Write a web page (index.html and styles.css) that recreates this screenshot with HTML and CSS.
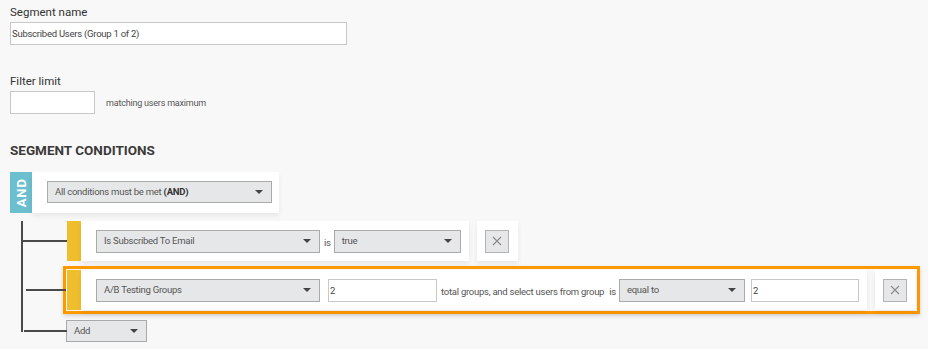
FILE: index.html
```html
<!DOCTYPE html>
<html lang="en">
<head>
  <meta charset="UTF-8" />
  <title>Segment</title>
  <link rel="stylesheet" href="styles.css">
</head>
<body>
  <div class="page">
    <label class="field-label">Segment name</label>
    <input class="text-input name-input" type="text" value="Subscribed Users (Group 1 of 2)" />

    <label class="field-label filter-label">Filter limit</label>
    <div class="filter-row">
      <input class="text-input limit-input" type="text" />
      <span class="hint">matching users maximum</span>
    </div>

    <h3 class="section-title">SEGMENT CONDITIONS</h3>

    <div class="group-head">
      <div class="badge"><span>AND</span></div>
      <div class="panel head-panel">
        <div class="select w-and"><span>All conditions must be met <b>(AND)</b></span><i class="caret"></i></div>
      </div>
    </div>

    <div class="tree">
      <div class="cond branch">
        <div class="cond-bar"></div>
        <div class="panel cond-body">
          <div class="select w-prop"><span>Is Subscribed To Email</span><i class="caret"></i></div>
          <span class="word">is</span>
          <div class="select w-bool"><span>true</span><i class="caret"></i></div>
        </div>
        <div class="panel remove-panel">
          <button class="remove">
            <svg width="10" height="10" viewBox="0 0 10 10"><path d="M1 1L9 9M9 1L1 9" stroke="#8a8a8a" stroke-width="1.1" fill="none"/></svg>
          </button>
        </div>
      </div>

      <div class="highlight branch">
        <div class="cond">
          <div class="cond-bar"></div>
          <div class="panel cond-body">
            <div class="select w-prop"><span>A/B Testing Groups</span><i class="caret"></i></div>
            <input class="text-input w-total" type="text" value="2" />
            <span class="word long">total groups, and select users from group</span>
            <span class="word is-gap">is</span>
            <div class="select w-op"><span>equal to</span><i class="caret"></i></div>
            <input class="text-input w-group" type="text" value="2" />
          </div>
          <div class="panel remove-panel">
            <button class="remove">
              <svg width="10" height="10" viewBox="0 0 10 10"><path d="M1 1L9 9M9 1L1 9" stroke="#8a8a8a" stroke-width="1.1" fill="none"/></svg>
            </button>
          </div>
        </div>
      </div>

      <div class="select add branch"><span>Add</span><i class="caret"></i></div>
    </div>
  </div>
</body>
</html>
```

FILE: styles.css
```css
html, body {
  margin: 0;
  padding: 0;
}
body {
  background-color: #f8f8f8;
  font-family: Roboto, "Liberation Sans", sans-serif;
  color: #444;
}

.page {
  padding: 0 10px;
}

.field-label {
  display: block;
  margin-top: 5px;
  font-size: 11.5px;
  line-height: 15px;
  color: #333;
}
.filter-label {
  margin-top: 29px;
}

.text-input {
  display: block;
  box-sizing: border-box;
  height: 23px;
  margin: 2px 0 0 0;
  padding: 0 1px;
  border: 1px solid #c8c8c8;
  background: #fff;
  font-family: Roboto, "Liberation Sans", sans-serif;
  font-size: 9.5px;
  letter-spacing: -0.25px;
  color: #444;
  outline: none;
}
.name-input {
  width: 337px;
}

.filter-row {
  display: flex;
  align-items: center;
}
.limit-input {
  width: 85px;
}
.hint {
  margin: 2px 0 0 11px;
  font-size: 9px;
  letter-spacing: -0.2px;
  color: #555;
}

.section-title {
  margin: 28px 0 0 0;
  font-size: 13.5px;
  line-height: 16px;
  font-weight: 700;
  color: #3b3b3b;
}

.panel {
  background: #fff;
  box-shadow: 0 3px 5px rgba(0, 0, 0, 0.07);
}

.group-head {
  display: flex;
  margin-top: 14px;
  height: 41px;
}
.badge {
  width: 22px;
  background: #6cbfcf;
  display: flex;
  align-items: center;
  justify-content: center;
}
.badge span {
  writing-mode: vertical-rl;
  transform: rotate(180deg);
  color: #fff;
  font-weight: 700;
  font-size: 13px;
  letter-spacing: 1px;
}
.head-panel {
  display: flex;
  align-items: center;
  padding: 0 7px 1px 15px;
}

.select {
  box-sizing: border-box;
  display: flex;
  align-items: center;
  justify-content: space-between;
  height: 23px;
  padding: 0 8px 2px 7px;
  background: #e6e7e8;
  border: 1px solid #aaa;
  font-size: 9.5px;
  letter-spacing: -0.25px;
  color: #555;
}
.select b {
  color: #333;
}
.caret {
  width: 0;
  height: 0;
  margin-top: 2px;
  border-top: 4px solid #444;
  border-left: 4px solid transparent;
  border-right: 4px solid transparent;
}
.w-and {
  width: 225px;
  height: 22px;
}
.w-prop {
  width: 224px;
}
.w-bool {
  width: 127px;
}
.w-op {
  width: 126px;
}

.tree {
  position: relative;
  padding-left: 57px;
}
.tree::before {
  content: "";
  position: absolute;
  left: 11px;
  top: 0;
  bottom: 10px;
  width: 2px;
  background: #4a4a4a;
}
.branch {
  position: relative;
}
.branch::before {
  content: "";
  position: absolute;
  right: 100%;
  top: calc(50% - 1px);
  width: 44px;
  height: 2px;
  background: #4a4a4a;
}

.cond {
  display: flex;
  height: 40px;
}
.tree > .cond {
  margin-top: 8px;
}
.cond-bar {
  width: 14px;
  background: #eebe2c;
}
.cond-body {
  display: flex;
  align-items: center;
  padding: 0 8px 0 15px;
}
.word {
  font-size: 9.5px;
  letter-spacing: -0.25px;
  color: #555;
  margin: 2px 3px 0 4px;
}
.long {
  margin: 2px 0 0 4px;
}
.is-gap {
  margin: 2px 3px 0 5px;
}
.w-total {
  width: 109px;
  margin: 0 0 0 8px;
}
.w-group {
  width: 108px;
  margin: 0 0 0 6px;
}

.remove-panel {
  display: flex;
  align-items: center;
  justify-content: center;
  width: 41px;
  margin-left: 8px;
}
.remove {
  box-sizing: border-box;
  width: 24px;
  height: 23px;
  padding: 0;
  display: flex;
  align-items: center;
  justify-content: center;
  background: #e6e7e8;
  border: 1px solid #b4b4b4;
}

.highlight {
  width: max-content;
  margin: 5px 0 0 -4px;
  padding: 1px;
  border: 3px solid #ff9900;
  box-shadow: 0 2px 4px rgba(0, 0, 0, 0.15);
}
.highlight::before {
  width: 40px;
}

.add {
  width: 81px;
  height: 22px;
  margin: 6px 0 0 -1px;
}
.add::before {
  width: 43px;
}
```
